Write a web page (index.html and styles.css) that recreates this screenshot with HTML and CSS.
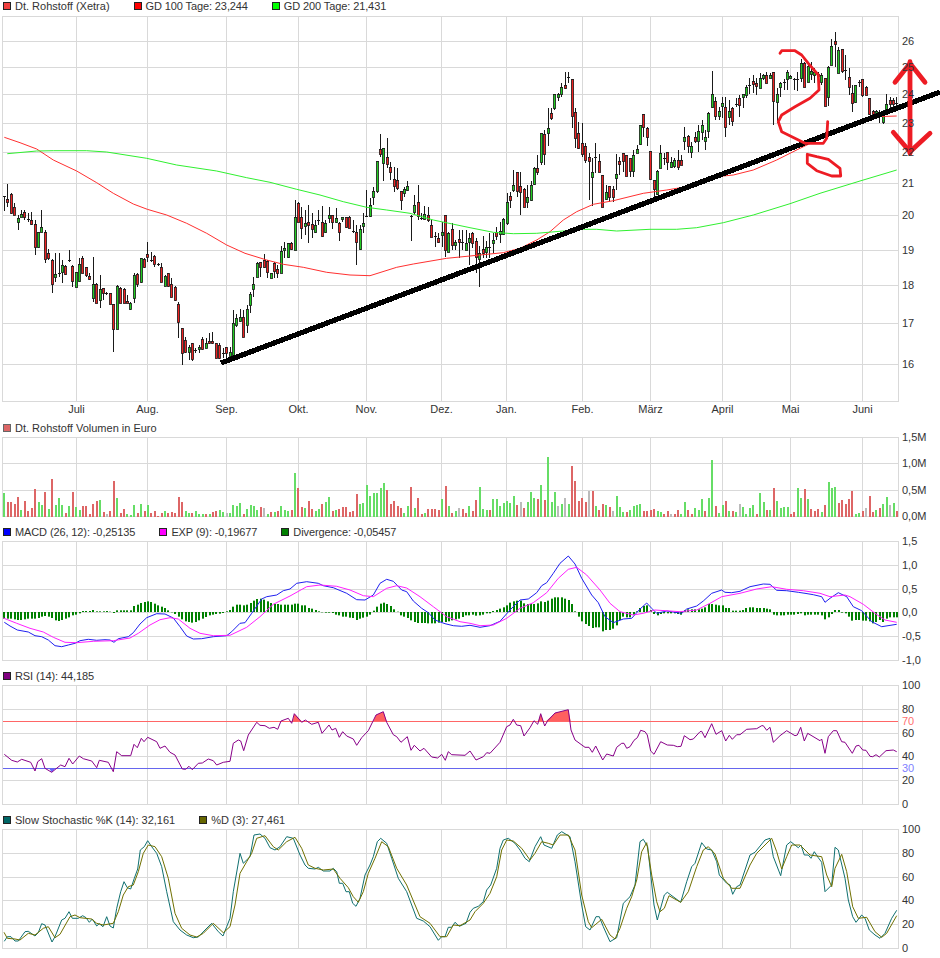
FILE: index.html
```html
<!DOCTYPE html>
<html lang="de">
<head>
<meta charset="utf-8">
<title>Dt. Rohstoff Chart</title>
<link rel="stylesheet" href="styles.css">
</head>
<body>
<main class="charts">
  <section class="panel">
    <div class="legend">
      <span class="item"><i class="sw sw-price"></i>Dt. Rohstoff (Xetra)</span>
      <span class="item tight"><i class="sw sw-red"></i>GD 100 Tage: 23,244</span>
      <span class="item tight"><i class="sw sw-green"></i>GD 200 Tage: 21,431</span>
    </div>
    <svg id="price" class="plot plot-price" viewBox="0 12 940 410"></svg>
  </section>
  <section class="panel">
    <div class="legend">
      <span class="item"><i class="sw sw-vol"></i>Dt. Rohstoff Volumen in Euro</span>
    </div>
    <svg id="volume" class="plot plot-volume" viewBox="0 434 940 92"></svg>
  </section>
  <section class="panel">
    <div class="legend">
      <span class="item tight"><i class="sw sw-blue"></i>MACD (26, 12): -0,25135</span>
      <span class="item tight"><i class="sw sw-magenta"></i>EXP (9): -0,19677</span>
      <span class="item tight"><i class="sw sw-div"></i>Divergence: -0,05457</span>
    </div>
    <svg id="macd" class="plot plot-ind" viewBox="0 538 940 132"></svg>
  </section>
  <section class="panel">
    <div class="legend">
      <span class="item tight"><i class="sw sw-purple"></i>RSI (14): 44,185</span>
    </div>
    <svg id="rsi" class="plot plot-ind" viewBox="0 682 940 132"></svg>
  </section>
  <section class="panel">
    <div class="legend">
      <span class="item"><i class="sw sw-teal"></i>Slow Stochastic %K (14): 32,161</span>
      <span class="item"><i class="sw sw-olive"></i>%D (3): 27,461</span>
    </div>
    <svg id="stoch" class="plot plot-ind" viewBox="0 826 940 132"></svg>
  </section>
</main>
<script src="chart.js"></script>
</body>
</html>
```
FILE: styles.css
```css
* { box-sizing: border-box; }
html, body { margin: 0; padding: 0; background: #fff; }
body { width: 940px; height: 958px; overflow: hidden; font-family: "Liberation Sans", Arial, sans-serif; font-size: 11px; color: #333; }
.charts { display: flex; flex-direction: column; }
.panel { display: flex; flex-direction: column; }
.legend { display: flex; align-items: center; gap: 24px; height: 12px; padding-left: 3px; white-space: nowrap; line-height: 12px; }
.item { display: flex; align-items: center; gap: 4px; }
.tight { letter-spacing: -0.11px; }
.sw { display: block; width: 8px; height: 8px; border: 1px solid #222; }
.sw-price { background: #f04040; }
.sw-red { background: #ff0000; }
.sw-green { background: #00ff00; }
.sw-vol { background: #dd6666; border-color: #666; }
.sw-blue { background: #0000ff; }
.sw-magenta { background: #ff00ff; }
.sw-div { background: #008000; }
.sw-purple { background: #800080; }
.sw-teal { background: #006666; }
.sw-olive { background: #666600; }
.plot { display: block; width: 940px; overflow: visible; }
.plot-price { height: 410px; }
.plot-volume { height: 92px; }
.plot-ind { height: 132px; }
.grid { stroke: #d9d9d9; stroke-width: 1; shape-rendering: crispEdges; fill: none; }
.axis { font-family: "Liberation Sans", Arial, sans-serif; font-size: 11px; fill: #333; }
.axis-red { fill: #ff7070; }
.axis-blue { fill: #8080ff; }
.wick { stroke: #1a1a1a; stroke-width: 1; shape-rendering: crispEdges; }
.body { stroke: #1a1a1a; stroke-width: 0.8; }
.c-r { fill: #ee2222; }
.c-g { fill: #22cc22; }
.v-r { fill: #dd6666; }
.v-g { fill: #66dd66; }
.v-x { fill: #bbbbbb; }
.hist { fill: #008000; }
.line { fill: none; stroke-width: 1; stroke-linejoin: round; }
.l-red { stroke: #ff3030; }
.l-green { stroke: #30f030; }
.l-blue { stroke: #2020f0; }
.l-magenta { stroke: #ff20ff; }
.l-purple { stroke: #880088; }
.l-teal { stroke: #107070; }
.l-olive { stroke: #707000; }
.limit-red { stroke: #ff6666; stroke-width: 1; shape-rendering: crispEdges; }
.limit-blue { stroke: #6666ee; stroke-width: 1; shape-rendering: crispEdges; }
.fill-red { fill: #ff6060; }
.fill-blue { fill: #6666ff; }
.trend { stroke: #000; stroke-width: 5.2; fill: none; shape-rendering: crispEdges; }
.ink-thin { stroke: #ed1c24; stroke-width: 2.8; fill: none; stroke-linecap: round; stroke-linejoin: round; }
.ink-thick { stroke: #ed1c24; stroke-width: 4.8; fill: none; stroke-linecap: round; stroke-linejoin: miter; }
```
FILE: chart.js
```js
const NS = "http://www.w3.org/2000/svg";
function el(parent, tag, attrs, text) {
  const n = document.createElementNS(NS, tag);
  for (const k in attrs) n.setAttribute(k, attrs[k]);
  if (text !== undefined) n.textContent = text;
  parent.appendChild(n);
  return n;
}
const MONTHS = [[76,"Juli"],[147,"Aug."],[226,"Sep."],[298,"Okt."],[366,"Nov."],[441,"Dez."],[506,"Jan."],[582,"Feb."],[650,"März"],[722,"April"],[790,"Mai"],[862,"Juni"]];
const L = 2, R = 898, AX = 902;
const X = i => Math.round(3.83 + 3.42 * i);
const BX = i => Math.round(3.33 + 3.42 * i);

function frame(svg, top, bottom, ticks) {
  const g = el(svg, "g", {class: "grid"});
  const hl = y => el(g, "line", {x1: L, x2: R + 1, y1: y + .5, y2: y + .5});
  hl(top); hl(bottom);
  ticks.forEach(t => { if (t[0] !== null) hl(t[0]); });
  MONTHS.forEach(m => el(g, "line", {x1: m[0] + .5, x2: m[0] + .5, y1: top, y2: bottom}));
  [L, R].forEach(x => el(g, "line", {x1: x + .5, x2: x + .5, y1: top, y2: bottom + 1}));
}
function labels(svg, list) {
  list.forEach(t => el(svg, "text", {class: "axis " + (t[2] || ""), x: AX, y: t[0] + 4}, t[1]));
}
// segments are read in zoom space: [offsetX, offsetY, "x,y x,y ..."] at 3 units per pixel
function pts(segs) {
  return segs.map(s => s[2].trim().split(/\s+/).map(p => {
    const a = p.split(",");
    return (s[0] + a[0] / 3).toFixed(1) + "," + (s[1] + a[1] / 3).toFixed(1);
  }).join(" ")).join(" ");
}
function line(svg, cls, segs) { el(svg, "polyline", {class: "line " + cls, points: pts(segs)}); }

/* ---------- price ---------- */
const CANDLES = "196 211 196 197 d;184 207 199 202 r;193 214 194 213 r;203 215 207 215 r;215 230 218 222 g;210 217 214 217 g;210 220 212 217 r;213 222 219 220 d;212 225 220 224 r;220 255 224 247 r;232 248 232 247 g;210 232 227 232 g;230 263 232 259 r;249 260 253 258 r;259 293 260 284 r;253 282 274 277 g;253 277 273 274 d;260 283 265 272 g;265 275 266 274 r;250 262 260 261 d;265 287 266 281 r;272 287 272 287 g;258 282 264 281 g;256 273 258 273 r;267 277 267 275 r;273 280 276 279 r;257 302 284 298 g;283 303 284 303 r;275 308 289 300 g;288 300 288 293 r;292 295 293 294 d;293 304 293 304 r;304 352 304 329 r;285 329 286 329 g;287 303 288 303 r;288 303 289 303 r;295 303 301 303 r;302 310 303 309 g;273 303 275 298 g;273 287 274 284 r;258 283 258 282 g;258 268 259 267 r;242 262 254 257 r;252 262 260 261 d;255 267 256 264 r;263 266 264 266 d;263 282 267 282 r;275 286 276 286 g;273 287 273 286 r;278 297 284 297 r;286 301 287 300 r;302 338 304 322 r;328 365 328 353 r;337 353 340 352 r;345 360 347 352 g;343 361 343 359 r;348 353 350 351 d;345 353 347 349 g;337 350 339 349 r;338 348 343 348 g;333 344 341 343 r;332 344 341 343 r;343 358 343 358 r;343 359 345 358 r;348 358 353 354 d;347 358 347 353 r;347 358 352 356 g;310 358 323 357 g;314 327 318 325 g;309 322 317 321 g;310 337 317 337 r;305 333 309 325 g;292 313 294 305 g;277 297 284 289 g;262 277 263 277 g;262 277 262 267 r;254 268 260 267 r;260 278 261 272 r;273 278 273 278 g;262 278 263 271 r;265 278 269 273 r;246 273 251 273 g;242 258 248 250 g;243 258 243 257 g;242 250 243 249 r;200 250 217 250 g;202 222 203 222 r;207 239 217 228 r;210 235 223 226 g;205 243 222 225 r;213 238 224 229 r;220 233 225 232 g;210 225 220 221 d;206 237 222 236 r;220 233 223 232 g;207 223 215 218 g;215 229 215 222 r;208 223 218 222 g;222 241 223 232 r;217 222 217 219 g;217 228 217 227 r;216 228 217 228 r;220 233 231 232 d;225 265 232 242 r;225 250 229 249 g;213 233 223 226 g;190 217 216 217 d;198 217 205 216 g;187 205 191 197 g;161 193 161 191 g;134 157 149 154 r;148 181 148 163 g;138 168 157 164 r;162 180 167 172 r;167 192 179 186 r;168 190 180 188 r;191 210 191 200 r;187 197 189 193 g;181 191 186 190 g;215 241 216 217 d;195 215 205 212 g;185 220 202 216 r;213 220 218 219 d;206 220 214 219 g;207 222 215 220 r;220 237 225 237 r;232 247 236 237 d;233 243 238 242 r;222 247 232 235 g;215 257 215 250 r;232 252 233 252 g;223 250 229 245 r;240 250 242 245 g;230 258 239 242 r;230 250 242 243 d;230 250 243 250 g;233 265 238 242 g;232 248 233 243 r;238 273 241 257 r;246 287 253 259 g;236 258 249 253 r;241 258 247 252 g;233 258 247 248 d;233 253 240 243 g;227 240 232 236 r;222 243 231 234 g;218 235 219 234 g;193 225 202 223 g;192 208 196 200 r;170 192 185 190 g;172 197 172 191 r;172 215 186 192 r;188 207 189 207 r;185 208 197 202 g;181 201 185 200 g;167 185 168 184 g;155 175 168 172 r;133 165 133 162 g;130 165 134 154 r;108 146 128 133 g;108 120 113 118 r;94 110 94 108 g;93 101 94 97 g;83 97 87 94 g;72 89 85 88 r;72 83 77 78 d;79 128 79 116 r;108 148 112 138 r;122 149 133 148 r;123 157 143 154 r;143 163 146 160 r;153 200 157 161 r;158 206 172 177 g;143 173 157 158 d;154 172 161 172 r;175 207 175 207 r;185 200 192 199 g;186 202 186 197 r;186 202 189 197 r;154 190 174 178 g;157 175 161 164 r;153 172 153 161 r;155 176 155 176 r;158 177 158 171 r;150 177 155 171 g;145 153 149 153 g;125 145 125 144 g;114 137 114 127 r;127 146 128 137 r;151 180 151 179 r;180 200 180 189 r;170 195 171 194 g;145 168 153 168 g;153 165 158 159 d;152 170 152 162 r;157 168 162 167 g;158 168 160 166 g;150 170 160 167 r;155 165 160 165 r;127 150 137 141 g;135 153 136 146 r;142 158 146 152 g;132 143 137 141 r;125 152 131 141 g;120 140 125 132 g;130 150 137 141 g;112 138 113 131 g;71 108 94 107 g;97 120 101 116 r;107 120 111 116 g;97 118 103 106 g;97 137 107 127 r;100 125 111 117 g;107 126 108 121 r;98 107 104 105 d;95 117 98 105 r;94 108 94 97 g;85 98 87 95 g;78 94 85 86 d;75 93 81 84 r;78 95 83 86 r;73 88 78 88 g;74 80 75 78 g;72 83 75 83 r;73 78 75 78 g;72 125 72 101 r;88 123 94 102 g;82 97 83 87 g;79 90 82 83 d;70 90 72 79 g;75 79 76 78 g;78 90 79 80 d;72 91 79 80 d;59 82 63 78 g;62 87 63 87 r;65 82 66 82 g;62 80 71 74 g;68 83 72 75 g;72 85 74 76 g;73 85 75 82 g;78 106 78 106 r;66 106 67 97 g;39 65 46 65 g;32 67 41 44 r;47 73 50 73 g;49 73 49 71 r;55 80 70 71 d;68 95 77 87 r;85 112 93 103 r;85 103 85 102 g;80 87 82 83 d;79 97 79 95 r;86 95 87 95 r;98 115 98 114 r;110 117 111 115 r;110 117 111 114 g;110 123 115 116 d;110 124 111 122 g;94 113 104 113 g;97 110 100 104 r;98 108 100 104 r;97 107 103 104 d".split(";");

const price = document.getElementById("price");
const PT = [[41,"26"],[67,"25"],[94,"24"],[123,"23"],[152,"22"],[183,"21"],[215,"20"],[250,"19"],[285,"18"],[323,"17"],[364,"16"]];
frame(price, 16, 401, PT);
const wg = el(price, "g", {});
CANDLES.forEach((c, i) => {
  const a = c.split(" "), hi = +a[0], lo = +a[1], t = +a[2], b = +a[3], k = a[4], x = X(i);
  el(wg, "line", {class: "wick", x1: x + .5, x2: x + .5, y1: hi, y2: lo});
  if (k === "d") {
    el(wg, "line", {class: "wick", x1: x - 1, x2: x + 2, y1: t + .5, y2: t + .5});
  } else {
    el(wg, "rect", {class: "body c-" + k, x: x - .6, y: t + .5, width: 2.2, height: Math.max(b - t, 1)});
  }
});
line(price, "l-red", [
  [0, 0, "13,412 60,428 110,447 160,480 230,513 290,548 340,580 400,612 442,628"],
  [0, 170, "500,135 560,160 620,190 680,225 735,250 800,270 850,283 910,292 980,307 1050,315 1110,317 1190,292 1240,282 1340,265 1410,258"],
  [470, 170, "50,253 100,248 150,235 200,210 240,185 280,150 320,125 370,103 430,92 520,70 590,60 650,50 760,18"],
  [470, 0, "790,525 850,510 920,480 990,445 1130,378 1220,350 1280,348"]
]);
line(price, "l-green", [
  [0, 0, "22,461 110,453 160,452 260,452 320,456 440,475 530,495 650,513 740,533 810,547 890,568 960,585 1030,605 1100,622 1160,630"],
  [0, 170, "1230,130 1300,150 1410,173"],
  [470, 170, "70,187 130,191 200,190 280,183 340,178 380,178 440,183 540,178 620,178 680,173 760,158 850,135 960,101 1050,70 1170,33 1280,0"]
]);
el(price, "line", {class: "trend", x1: 221, y1: 363, x2: 940, y2: 92});
el(price, "polyline", {class: "ink-thin", points: pts([[470, 0, "930,160 935,152 975,152 995,165 1015,190 1045,225 1047,270 1020,295 975,320 935,345 925,365 935,395 1005,430 1060,430 1070,415 1073,365"]])});
el(price, "polyline", {class: "ink-thin", points: pts([[470, 0, "1012,463 1012,490 1040,512 1085,528 1112,528 1110,505 1075,478 1040,470 1012,463"]])});
el(price, "polyline", {class: "ink-thick", points: pts([[470, 0, "1320,185 1320,460"]])});
el(price, "polyline", {class: "ink-thick", points: pts([[470, 0, "1275,247 1320,190 1365,247"]])});
el(price, "polyline", {class: "ink-thick", points: pts([[470, 0, "1270,397 1320,455 1380,400"]])});
labels(price, PT);
MONTHS.forEach(m => el(price, "text", {class: "axis", x: m[0] + .5, y: 413, "text-anchor": "middle"}, m[1]));

/* ---------- volume ---------- */
const VOL = "g72 r45 r45 r39 r60 g21 r48 r18 r27 r84 g45 g36 r75 g24 r114 g36 g57 g36 r12 g33 r75 g30 g21 r33 r33 r9 r39 r48 g51 r15 x9 r18 r108 g57 r12 r24 g9 g6 g36 r12 g39 r18 g36 r12 r18 r3 r12 g18 r12 r15 r12 r60 r45 g18 g12 r12 g18 g9 g9 r9 g9 r15 r18 g21 g15 x12 g12 g36 g33 g42 r9 g24 g36 g33 g21 r30 x27 g9 r15 g15 r18 g33 g21 g18 r21 g132 r87 r30 g27 r48 r24 g18 g24 r39 g45 g60 r18 g21 r24 r30 r30 r15 r18 r69 g39 g42 g96 g63 g72 g72 g87 g102 r81 r39 r48 r33 r27 g12 g33 r90 g27 r57 r9 g12 r24 r24 r24 r21 g54 r93 g33 r12 g18 x27 r24 r12 g33 " +
 "r18 r51 g90 g24 g21 r21 g54 g54 g33 g42 g48 g42 g63 r36 x45 r27 g45 g75 g57 r54 g96 r51 g180 g45 g75 x33 g39 x57 g39 r153 r108 r48 r57 r45 x78 r78 g33 r21 r39 g36 r30 x18 g63 g30 g15 r15 g21 g33 g36 g39 r18 r18 r21 r24 g18 g15 r9 r18 x9 r9 r21 g9 g45 r21 r9 g27 g21 g54 r18 g57 g171 r33 g12 g36 r48 g18 r18 g15 x39 g30 g9 g27 g36 r9 g72 g45 r21 g21 r87 g48 g27 g30 g30 r9 r15 g87 g57 r84 g54 r24 r18 r24 g15 r36 g105 g87 g90 r42 r51 r39 r54 r78 g9 g12 r18 x27 r63 r15 g21 r27 g39 g60 x36 g42 r18";
const volume = document.getElementById("volume");
const VT = [[437,"1,5M"],[463,"1,0M"],[490,"0,5M"],[516,"0,0M"]];
frame(volume, 437, 516, VT);
VOL.split(/\s+/).forEach((v, i) => {
  const h = v.slice(1) / 3;
  el(volume, "rect", {class: "v-" + v[0], x: BX(i), y: 517 - h, width: 2, height: h});
});
labels(volume, VT);

/* ---------- MACD ---------- */
const HIST = [-20,-20,-20,-22,-24,-24,-22,-20,-20,-20,-18,-14,-12,-14,-18,-25,-27,-24,-20,-16,-10,-8,-4,3,3,3,6,2,2,2,3,1,-3,5,5,5,5,5,18,22,27,30,32,30,25,20,16,12,5,-1,-6,-14,-22,-28,-30,-32,-30,-25,-20,-15,-10,-8,-6,-5,-3,2,6,16,22,22,20,22,27,34,39,40,37,32,27,24,24,22,22,22,22,25,25,20,20,12,10,6,2,-1,-2,-2,-3,-8,-10,-14,-14,-17,-18,-24,-20,-17,-14,-8,4,16,25,28,24,18,8,1,-10,-14,-18,-25,-30,-33,-33,-33,-34,-34,-34,-32,-30,-30,-28,-25,-22,-20,-15,-10,-10,
 -8,-11,-10,-8,-4,-4,3,6,10,14,20,28,32,34,34,26,24,24,24,26,32,30,34,40,44,44,44,40,36,24,2,-14,-28,-36,-42,-48,-46,-46,-58,-54,-54,-50,-40,-24,-14,-16,-16,-8,2,12,18,20,6,-6,-10,-6,-4,-4,-4,-4,-6,-8,6,8,8,8,8,10,14,24,24,22,20,20,12,12,4,4,4,6,12,14,14,12,12,12,10,8,-8,-10,-10,-10,-8,-8,-8,-6,-4,-10,-8,-8,-8,-8,-10,-22,-16,-6,6,6,-2,-4,-14,-26,-24,-24,-26,-26,-28,-34,-30,-24,-30,-20,-16,-16,-16];
const macd = document.getElementById("macd");
const MT = [[541,"1,5"],[565,"1,0"],[589,"0,5"],[612,"0,0"],[636,"-0,5"],[660,"-1,0"]];
frame(macd, 541, 660, MT);
HIST.forEach((v, i) => {
  const h = Math.abs(v) / 3;
  el(macd, "rect", {class: "hist", x: BX(i), y: v > 0 ? 612 - h : 612, width: 2, height: h});
});
line(macd, "l-blue", [
  [0, 420, "13,607 30,618 52,630 85,636 105,647 125,650 145,660 165,677 185,680 205,675 225,670 240,662 265,658 290,661 315,659 330,660 342,667 355,656 385,650 400,638 420,612 440,593 470,581 495,582 520,594 540,620 560,648 580,657 605,656 640,650 680,647 695,635 720,610 735,608 755,580 785,537 800,530 830,525 850,512 870,507 890,490 920,485 955,490 970,497 1000,503 1040,520 1070,539 1095,540 1120,525 1140,490 1160,478 1180,484 1205,510 1220,515 1240,543 1265,565 1285,578 1305,600 1335,611 1360,617 1385,619 1410,616"],
  [470, 420, "30,622 60,617 90,604 120,570 150,540 175,537 200,518 215,497 230,488 250,460 270,430 295,408 315,432 335,475 365,525 385,548 405,590 430,608 460,597 485,595 510,567 530,549 545,565 560,580 590,573 635,580 650,567 680,558 700,543 725,520 755,510 765,517 785,518 810,514 840,500 880,492 900,493 920,511 950,512 985,517 1005,520 1030,524 1055,530 1065,547 1080,535 1105,518 1130,530 1150,560 1175,572 1205,605 1235,620 1280,613"]
]);
line(macd, "l-magenta", [
  [0, 420, "10,594 50,610 90,625 130,636 160,652 195,667 230,668 280,664 340,662 390,654 415,640 450,615 480,599 510,593 535,597 570,625 600,640 640,647 690,646 740,622 780,590 820,553 870,528 920,500 960,495 1010,499 1050,510 1090,527 1120,530 1160,505 1190,497 1220,504 1260,530 1300,560 1340,590 1380,605 1410,610"],
  [470, 420, "30,617 70,615 110,595 150,565 190,548 230,518 265,475 295,448 320,442 350,465 390,510 420,550 450,575 490,585 520,580 555,570 630,575 680,570 720,550 755,530 810,520 860,507 905,500 950,508 1000,512 1050,520 1080,530 1125,525 1140,530 1180,553 1215,580 1245,600 1280,607"]
]);
labels(macd, MT);

/* ---------- RSI ---------- */
const rsi = document.getElementById("rsi");
frame(rsi, 685, 804, [[709],[733],[756],[780]]);
function poly(svg, cls, segs) { el(svg, "polygon", {class: cls, points: pts(segs)}); }
poly(rsi, "fill-red", [[0, 665, "878,169 883,146 905,169"]]);
poly(rsi, "fill-red", [[0, 665, "1120,169 1128,150 1150,140 1160,169"]]);
poly(rsi, "fill-red", [[470, 665, "205,169 212,146 220,169"]]);
poly(rsi, "fill-red", [[470, 665, "228,169 255,144 295,134 302,169"]]);
poly(rsi, "fill-blue", [[0, 665, "147,310 155,322 167,310"]]);
el(rsi, "line", {class: "limit-red", x1: L + 1, x2: R, y1: 721.5, y2: 721.5});
el(rsi, "line", {class: "limit-blue", x1: L + 1, x2: R, y1: 768.5, y2: 768.5});
line(rsi, "l-purple", [
  [0, 665, "13,268 35,286 52,291 65,283 92,292 105,318 113,290 125,281 135,310 155,322 182,300 195,305 207,280 218,297 238,273 250,281 275,288 290,308 298,286 325,292 340,320 350,260 365,272 392,272 402,238 412,248 424,220 432,230 443,217 470,230 480,250 495,243 510,262 525,270 547,312 557,313 567,304 577,314 595,295 607,294 625,282 640,287 650,300 670,292 690,289 700,235 715,225 722,228 731,257 745,210 770,172 780,181 795,182 808,190 822,187 833,193 843,168 865,160 875,175 883,146 905,172 916,165 935,178 955,172 966,205 987,180 996,195 1007,190 1018,217 1028,200 1040,213 1060,222 1070,241 1085,218 1105,197 1128,150 1150,140 1160,172 1180,209 1190,215 1203,232 1222,215 1233,256 1243,241 1260,258 1272,250 1295,276 1313,279 1325,268 1336,286 1345,260 1355,269 1395,271 1410,258"],
  [470, 665, "18,285 40,275 50,263 60,265 90,232 110,185 120,180 130,163 140,180 152,182 162,213 180,188 192,167 203,178 212,146 224,183 233,167 255,144 295,134 303,195 315,225 345,247 357,247 367,262 377,243 398,285 410,267 430,273 440,247 455,235 462,235 470,250 480,245 492,226 502,218 512,196 525,200 532,210 542,258 552,268 572,230 592,240 610,241 622,245 633,244 643,212 660,224 670,222 690,200 695,199 705,218 725,176 738,208 755,197 767,228 778,211 787,223 800,209 810,209 830,193 860,191 875,182 880,182 890,196 900,187 910,232 930,212 950,197 975,212 982,210 992,187 1003,228 1013,205 1050,227 1055,222 1065,265 1075,215 1090,197 1100,197 1115,230 1125,232 1147,265 1158,243 1167,241 1178,255 1188,256 1200,274 1208,275 1218,269 1228,276 1248,257 1270,255 1280,260"]
]);
labels(rsi, [[685,"100"],[709,"80"],[721,"70","axis-red"],[733,"60"],[756,"40"],[768,"30","axis-blue"],[780,"20"],[804,"0"]]);

/* ---------- stochastic ---------- */
const stoch = document.getElementById("stoch");
const ST = [[829,"100"],[853,"80"],[877,"60"],[900,"40"],[924,"20"],[948,"0"]];
frame(stoch, 829, 948, ST);
line(stoch, "l-teal", [
  [0, 665, "13,829 22,815 33,815 45,828 55,828 75,800 85,799 105,813 115,803 125,776 135,780 156,831 165,815 185,765 195,760 207,740 217,760 235,760 248,752 258,758 268,772 277,762 290,783 298,776 309,785 320,755 330,783 340,789 350,730 362,680 372,650 382,668 392,672 403,640 413,612 421,555 433,545 443,527 455,545 470,565 485,605 500,680 520,770 540,795 560,810 580,818 595,816 615,795 635,775 655,800 669,813 680,785 690,760 700,680 720,565 730,595 750,575 762,510 780,507 795,520 810,548 825,555 840,545 860,515 880,520 900,570 915,600 925,610 945,612 955,607 970,618 990,618 1000,610 1010,620 1018,655 1028,655 1038,680 1048,680 1058,715 1068,724 1080,700 1095,630 1110,600 1120,575 1132,530 1142,520 1160,535 1175,580 1195,640 1220,680 1250,760 1270,768 1290,785 1315,826 1325,815 1335,815 1345,787 1355,787 1365,772 1378,784 1398,775 1410,742"],
  [470, 665, "10,730 25,724 40,710 50,675 62,660 80,610 90,550 100,525 115,520 135,535 150,555 165,580 178,590 195,545 212,515 222,540 245,550 262,510 275,500 300,515 315,590 335,720 347,785 360,795 378,755 388,755 400,785 420,830 440,818 460,715 480,695 495,660 510,530 520,523 533,545 552,720 562,765 583,690 592,682 632,712 650,650 665,605 675,595 695,533 710,552 725,555 740,590 748,630 770,655 780,660 788,688 800,665 810,660 840,570 855,562 885,525 900,520 910,575 932,632 950,540 962,530 985,548 993,540 1003,570 1015,570 1023,580 1033,560 1045,578 1055,592 1065,680 1085,660 1095,547 1105,555 1125,640 1135,705 1148,755 1158,772 1175,750 1185,760 1198,795 1215,810 1230,820 1245,805 1265,760 1280,736"]
]);
line(stoch, "l-olive", [
  [0, 665, "12,802 22,820 45,822 60,825 85,805 105,810 130,790 145,785 165,818 180,808 210,755 225,750 240,758 275,762 290,775 310,780 340,775 355,740 370,690 385,665 400,660 415,620 430,565 445,540 465,545 485,575 505,640 525,745 545,790 570,810 590,816 610,805 640,775 670,803 690,785 705,720 720,625 740,590 755,565 770,520 795,512 820,545 835,555 860,530 885,517 905,550 925,600 945,610 970,615 1000,612 1020,640 1045,668 1060,695 1075,712 1090,680 1105,625 1125,580 1145,530 1165,545 1190,610 1220,660 1260,755 1290,775 1320,815 1340,815 1360,780 1380,782 1410,765"],
  [470, 665, "15,740 40,715 60,685 80,635 95,555 110,525 130,528 155,550 180,585 195,565 215,530 235,535 250,540 270,510 295,510 315,555 335,690 355,770 365,788 395,763 420,810 435,822 450,790 470,730 485,695 500,645 515,560 530,533 545,630 560,710 570,740 583,730 597,692 632,712 655,680 680,605 700,555 715,545 735,567 760,640 785,670 810,670 840,600 860,565 885,540 905,520 920,560 935,612 950,575 965,540 990,540 1020,570 1055,575 1070,630 1085,665 1095,610 1115,568 1130,620 1148,725 1165,760 1190,757 1215,800 1235,817 1250,805 1280,752"]
]);
labels(stoch, ST);
```
